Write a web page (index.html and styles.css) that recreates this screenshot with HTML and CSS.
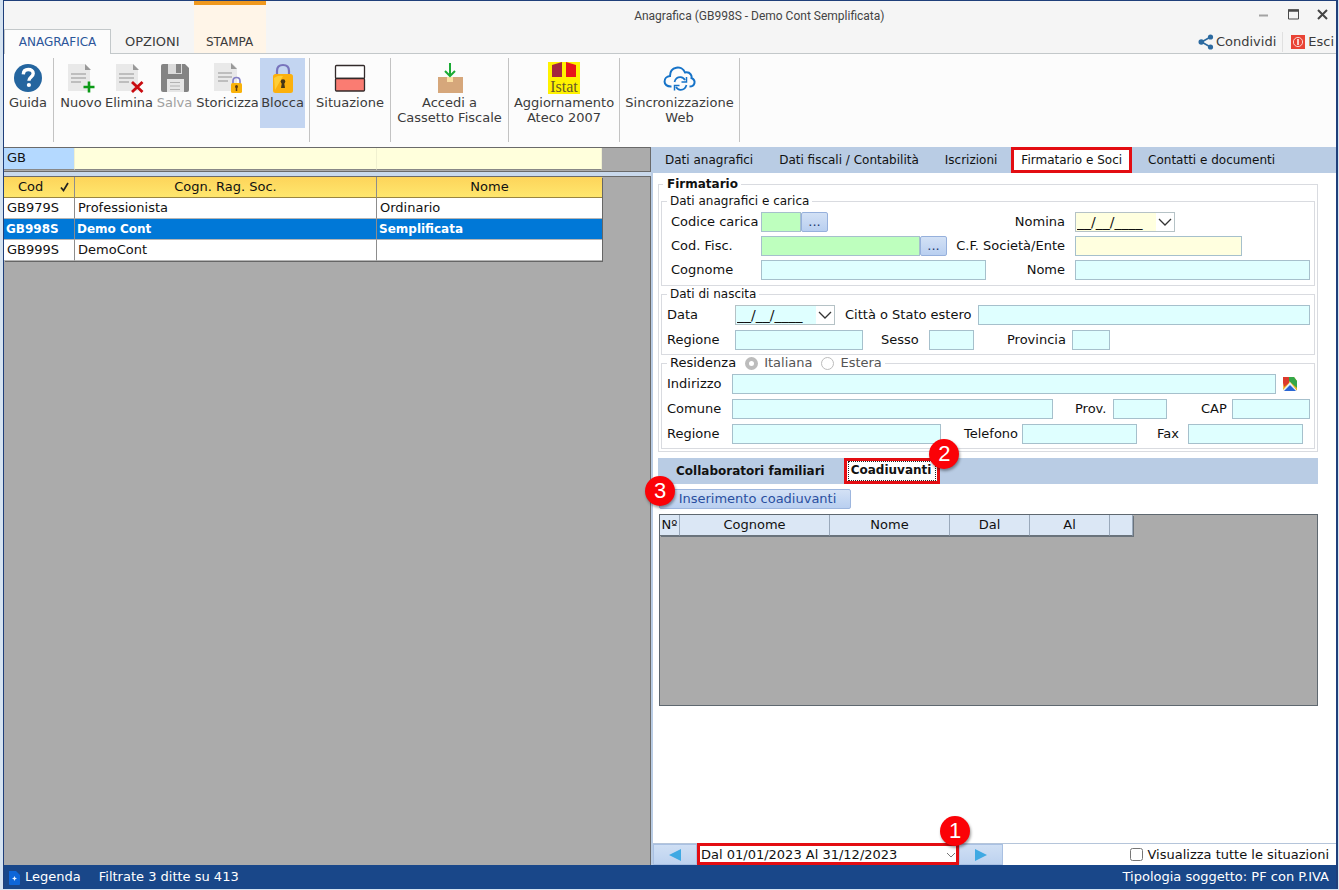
FILE: index.html
```html
<!DOCTYPE html>
<html lang="it">
<head>
<meta charset="utf-8">
<title>Anagrafica (GB998S - Demo Cont Semplificata)</title>
<link rel="stylesheet" href="styles.css">
</head>
<body>
<div class="window">
  <header class="titlebar">
    <nav class="ribbon-tabs">
      <button class="ribbon-tab active">ANAGRAFICA</button>
      <button class="ribbon-tab">OPZIONI</button>
      <button class="ribbon-tab highlight">STAMPA</button>
    </nav>
    <div class="caption">
      <div class="caption-top">
        <h1 class="caption-title">Anagrafica (GB998S - Demo Cont Semplificata)</h1>
        <div class="window-controls">
          <button aria-label="Riduci"><svg width="11" height="11" viewBox="0 0 11 11"><path d="M1 6.5h9" stroke="#a3a3a3" stroke-width="2"/></svg></button>
          <button aria-label="Ingrandisci"><svg width="11" height="11" viewBox="0 0 11 11"><path d="M0.500 1v9h10V1z" fill="none" stroke="#4a4a4a"/><path d="M0 1.500h11" stroke="#4a4a4a" stroke-width="2.500"/></svg></button>
          <button aria-label="Chiudi"><svg width="11" height="11" viewBox="0 0 11 11"><path d="M1 1l9 9M10 1l-9 9" stroke="#444" stroke-width="2"/></svg></button>
        </div>
      </div>
      <div class="caption-links">
        <button class="link-button"><svg width="16" height="16" viewBox="0 0 16 16"><path d="M12.500 3L3.500 8l9 5" fill="none" stroke="#2c6aa0" stroke-width="1.600"/><circle cx="12.500" cy="3" r="2.600" fill="#2c6aa0"/><circle cx="3.300" cy="8" r="2.800" fill="#2c6aa0"/><circle cx="12.500" cy="13" r="2.600" fill="#2c6aa0"/></svg>Condividi</button>
        <button class="link-button exit"><svg width="14" height="14" viewBox="0 0 14 14"><path d="M0 0h14v14H0z" fill="#e94335"/><circle cx="7" cy="7" r="4.600" fill="none" stroke="#fbd5d0"/><path d="M7 4v6" stroke="#fff" stroke-width="1.500"/></svg>Esci</button>
      </div>
    </div>
  </header>

  <div class="ribbon">
    <div class="ribbon-group">
      <button class="tool w-help"><svg width="32" height="32" viewBox="0 0 32 32"><circle cx="16" cy="16" r="14" fill="#24659f"/><path d="M11.300 12.300c.2-3.200 2.300-4.800 5-4.800 2.900 0 4.900 1.600 4.900 4 0 3.400-4.300 3.600-4.300 7.300" fill="none" stroke="#fff" stroke-width="3.400"/><circle cx="16.900" cy="23" r="2.100" fill="#fff"/></svg>Guida</button>
    </div>
    <div class="ribbon-group edit">
      <button class="tool w-new"><svg width="32" height="32" viewBox="0 0 32 32"><path d="M3 2h17l5 5v22H3z" fill="#e9e9e9"/><path d="M20 2v6h6z" fill="#999"/><path d="M6 12h15M6 16h15M6 20h10" stroke="#b0b0b0" stroke-width="1.500"/><path d="M24 19.500v11M18.500 25h11" stroke="#0b9a16" stroke-width="2.600"/></svg>Nuovo</button>
      <button class="tool w-new"><svg width="32" height="32" viewBox="0 0 32 32"><path d="M3 2h17l5 5v22H3z" fill="#e9e9e9"/><path d="M20 2v6h6z" fill="#999"/><path d="M6 12h15M6 16h15M6 20h10" stroke="#b0b0b0" stroke-width="1.500"/><path d="M19 20l10.500 10M29.500 20L19 30" stroke="#c90b10" stroke-width="2.800"/></svg>Elimina</button>
      <button class="tool w-save" disabled><svg width="32" height="32" viewBox="0 0 32 32"><path d="M4 2h22l4 4v22q0 2-2 2H4q-2 0-2-2V4q0-2 2-2z" fill="#787878"/><path d="M9 2h14v10H9z" fill="#d8d8d8"/><path d="M17 2h5v9h-5z" fill="#787878"/><path d="M8 17h17v13H8z" fill="#e4e4e4"/><path d="M11 20.500h10M11 24h10M11 27.500h10" stroke="#aaa"/></svg>Salva</button>
      <button class="tool w-store"><svg width="32" height="32" viewBox="0 0 32 32"><path d="M2 1h18l5 5v23H2z" fill="#e9e9e9"/><path d="M19 1v6h6z" fill="#999"/><path d="M6 11h14M6 15h14M6 19h10" stroke="#b0b0b0" stroke-width="1.500"/><path d="M21 22v-3q0-3.500 3.500-3.500T28 19v3" fill="none" stroke="#8580c5" stroke-width="1.700"/><rect x="19" y="21" width="11" height="10" rx="1.500" fill="#f9b20a"/><circle cx="24.500" cy="24.500" r="1.500" fill="#5b3a13"/><path d="M24.500 25v4" stroke="#5b3a13" stroke-width="1.500"/></svg>Storicizza</button>
      <button class="tool w-lock pressed"><svg width="32" height="32" viewBox="0 0 32 32"><path d="M10 15V9q0-6 6-6t6 6v6" fill="none" stroke="#7874bd" stroke-width="2.200"/><rect x="6" y="12" width="20" height="19" rx="2.500" fill="#fbb00e"/><path d="M7 16q4-3 9-2l-8 14z" fill="#ffcd35"/><circle cx="16" cy="19.500" r="2.300" fill="#463516"/><path d="M15 20h2l1 6h-4z" fill="#463516"/></svg>Blocca</button>
    </div>
    <div class="ribbon-group">
      <button class="tool w-state"><svg width="32" height="32" viewBox="0 0 32 32"><rect x="1.500" y="3.500" width="29" height="13" rx="1" fill="#fff" stroke="#332b2b" stroke-width="1.300"/><rect x="1.500" y="16.500" width="29" height="12.500" rx="1" fill="#fa7c72" stroke="#332b2b" stroke-width="1.300"/></svg>Situazione</button>
    </div>
    <div class="ribbon-group">
      <button class="tool w-box"><svg width="32" height="32" viewBox="0 0 32 32"><path d="M4 15h9v5h6v-5h10v16H4z" fill="#d6a77b"/><path d="M13 15h6v5h-6z" fill="#fbdfa5"/><path d="M16 1v13M11 9l5 5 5-5" fill="none" stroke="#1bab35" stroke-width="2"/></svg>Accedi a<br>Cassetto Fiscale</button>
    </div>
    <div class="ribbon-group">
      <button class="tool w-istat"><svg width="32" height="32" viewBox="0 0 32 32"><path d="M0 0h32v32H0z" fill="#fff200"/><path d="M4 3l10-3v15H4z" fill="#a3263e"/><path d="M18 0l10 3v12H18z" fill="#e8151b"/><text class="istat" x="16" y="30" text-anchor="middle">Istat</text></svg>Aggiornamento<br>Ateco 2007</button>
    </div>
    <div class="ribbon-group">
      <button class="tool w-sync"><svg width="34" height="32" viewBox="0 0 34 32"><path d="M8.500 24.500C-1 25 0 14.500 7 14 7 4 19 3 22 10.500c6-1 7 4 6.500 5.500 5 2.500 3.500 8.500-2 8.500" fill="none" stroke="#1673c8" stroke-width="2"/><path d="M11.500 20q1.500-5 6-4.800 3 .2 4.500 3M23.500 23q-1.500 5-6 4.800-3-.2-4.500-3" fill="none" stroke="#1673c8" stroke-width="1.700"/><path d="M23.500 15v5h-5M11.500 28.500v-5h5" fill="none" stroke="#1673c8" stroke-width="1.500"/></svg>Sincronizzazione<br>Web</button>
    </div>
  </div>

  <main class="workspace">
    <section class="list-pane">
      <div class="filter-bar">
        <input class="filter code" aria-label="Filtro codice" value="GB">
        <input class="filter" aria-label="Filtro ragione sociale">
        <input class="filter" aria-label="Filtro nome">
      </div>
      <div class="list-body">
        <table class="company-table">
          <thead><tr><th class="c-code"><span class="sort-head">Cod<svg width="10" height="10" viewBox="0 0 10 10"><path d="M1 5.500l2.500 3L8 1" fill="none" stroke="#222" stroke-width="1.700"/></svg></span></th><th class="c-name">Cogn. Rag. Soc.</th><th class="c-first">Nome</th></tr></thead>
          <tbody>
            <tr><td>GB979S</td><td>Professionista</td><td>Ordinario</td></tr>
            <tr class="selected"><td>GB998S</td><td>Demo Cont</td><td>Semplificata</td></tr>
            <tr><td>GB999S</td><td>DemoCont</td><td></td></tr>
          </tbody>
        </table>
      </div>
    </section>

    <section class="detail-pane">
      <nav class="page-tabs">
        <button class="page-tab">Dati anagrafici</button>
        <button class="page-tab">Dati fiscali / Contabilità</button>
        <button class="page-tab">Iscrizioni</button>
        <button class="page-tab current">Firmatario e Soci</button>
        <button class="page-tab">Contatti e documenti</button>
      </nav>

      <div class="detail-body">
        <fieldset class="group outer">
          <legend class="strong">Firmatario</legend>

          <fieldset class="group role">
            <legend>Dati anagrafici e carica</legend>
            <div class="role-row">
              <label for="carica">Codice carica</label>
              <div class="combo"><input class="field green w40" id="carica"><button class="dots" aria-label="Cerca carica">...</button></div>
              <label class="end" for="nomina">Nomina</label>
              <div class="date lemon"><input id="nomina" value="__/__/____"><button aria-label="Apri calendario nomina"><svg width="14" height="9" viewBox="0 0 14 9"><path d="M1 1l6 6 6-6" fill="none" stroke="#333" stroke-width="1.300"/></svg></button></div>
            </div>
            <div class="role-row">
              <label for="cf">Cod. Fisc.</label>
              <div class="combo tax"><input class="field green grow" id="cf"><button class="dots" aria-label="Cerca codice fiscale">...</button></div>
              <label class="end" for="cfente">C.F. Società/Ente</label>
              <div class="combo entity"><input class="field lemon grow" id="cfente"></div>
            </div>
            <div class="role-row">
              <label for="cognome">Cognome</label>
              <input class="field" id="cognome">
              <label class="end" for="nome">Nome</label>
              <input class="field" id="nome">
            </div>
          </fieldset>

          <fieldset class="group spaced">
            <legend>Dati di nascita</legend>
            <div class="row">
              <label class="l68" for="data">Data</label>
              <div class="date"><input id="data" value="__/__/____"><button aria-label="Apri calendario data"><svg width="14" height="9" viewBox="0 0 14 9"><path d="M1 1l6 6 6-6" fill="none" stroke="#333" stroke-width="1.300"/></svg></button></div>
              <label class="l-city" for="citta">Città o Stato estero</label>
              <input class="field grow" id="citta">
            </div>
            <div class="row">
              <label class="l68" for="regione1">Regione</label>
              <input class="field w128" id="regione1">
              <label class="l-sex" for="sesso">Sesso</label>
              <input class="field w45" id="sesso">
              <label class="l-prov" for="provincia">Provincia</label>
              <input class="field w38" id="provincia">
            </div>
          </fieldset>

          <fieldset class="group spaced">
            <legend class="residence">Residenza
              <label class="radio"><input type="radio" name="res" checked disabled>Italiana</label>
              <label class="radio"><input type="radio" name="res" disabled>Estera</label>
            </legend>
            <div class="row">
              <label class="l65" for="indirizzo">Indirizzo</label>
              <input class="field grow" id="indirizzo">
              <button class="map" aria-label="Apri mappa"><svg width="16" height="16" viewBox="0 0 16 16"><path d="M2 1h10l3 4v10L8 7 1 14z" fill="#f0b41e"/><path d="M7 1h5l3 4v7L7 5z" fill="#35a748"/><path d="M1 1h6v6l-5 4-1-4z" fill="#dc3a2c"/><path d="M8 6l7 9H1z" fill="#e6eefb"/><path d="M8 9l6 6H2z" fill="#2a66d4"/></svg></button>
            </div>
            <div class="row">
              <label class="l65" for="comune">Comune</label>
              <input class="field grow" id="comune">
              <label class="l-pr" for="prov">Prov.</label>
              <input class="field w54" id="prov">
              <label class="l-cap" for="cap">CAP</label>
              <input class="field w78" id="cap">
            </div>
            <div class="row phones">
              <label class="l65" for="regione2">Regione</label>
              <input class="field grow" id="regione2">
              <label class="l-tel" for="tel">Telefono</label>
              <input class="field w115" id="tel">
              <label class="l-fax" for="fax">Fax</label>
              <input class="field w115" id="fax">
            </div>
          </fieldset>
        </fieldset>

        <section class="members">
          <nav class="member-tabs">
            <button class="member-tab">Collaboratori familiari</button>
            <button class="member-tab current"><span>Coadiuvanti</span><b class="badge at-tab">2</b></button>
          </nav>
          <div class="member-tools">
            <button class="insert">Inserimento coadiuvanti<b class="badge at-insert">3</b></button>
          </div>
          <div class="member-grid">
            <table class="member-table">
              <thead><tr><th class="m-num">Nº</th><th class="m-sur">Cognome</th><th class="m-name">Nome</th><th class="m-date">Dal</th><th class="m-date">Al</th><th class="m-end"></th></tr></thead>
            </table>
          </div>
        </section>
      </div>

      <footer class="period-bar">
        <button class="step" aria-label="Periodo precedente"><svg width="12" height="12" viewBox="0 0 12 12"><path d="M12 0v12L0 6z" fill="#3fa9e3"/></svg></button>
        <div class="period"><select aria-label="Periodo"><option>Dal 01/01/2023 Al 31/12/2023</option></select><svg width="10" height="6" viewBox="0 0 10 6"><path d="M1 1l4 4 4-4" fill="none" stroke="#777"/></svg><b class="badge at-period">1</b></div>
        <button class="step" aria-label="Periodo successivo"><svg width="12" height="12" viewBox="0 0 12 12"><path d="M0 0v12l12-6z" fill="#3fa9e3"/></svg></button>
        <label class="show-all"><input type="checkbox">Visualizza tutte le situazioni</label>
      </footer>
    </section>
  </main>

  <footer class="status">
    <button class="legend-button"><svg width="13" height="15" viewBox="0 0 13 15"><path d="M1 1h7l4 4v9q0 1-1 1H2q-1 0-1-1z" fill="#0d66d8"/><path d="M6.500 6l.8 1.700 1.700.8-1.700.8-.8 1.700-.8-1.700-1.700-.8 1.700-.8z" fill="#e8f3ff"/></svg>Legenda</button>
    <span>Filtrate 3 ditte su 413</span>
    <span class="status-right">Tipologia soggetto: PF con P.IVA</span>
  </footer>
</div>
</body>
</html>
```
FILE: styles.css
```css
* { box-sizing: border-box; }
body {
  margin: 0;
  background: #d5e3f1;
  color: #111;
  font: 13px/16px "DejaVu Sans", Verdana, sans-serif;
}
button, input, select { font: inherit; color: inherit; margin: 0; padding: 0; border: 0; background: none; border-radius: 0; min-width: 0; }
button { white-space: nowrap; }
label { white-space: nowrap; }
svg { display: block; flex: none; }

.window {
  display: flex;
  flex-direction: column;
  min-height: calc(100vh - 1px);
  margin: 0 1px 1px 3px;
  border: solid #1f3f7a;
  border-width: 1px 2px 0 1px;
  background: #fff;
}

/* Title bar and ribbon */
.titlebar { display: flex; height: 53px; background: #f5f5f5; border-bottom: 1px solid #c3c8ca; color: #3b3b3b; }
.ribbon-tabs { display: flex; align-items: flex-end; flex: none; }
.ribbon-tab { height: 24px; padding: 2px 14px 0; }
.ribbon-tab.active { width: 107px; height: 25px; margin-bottom: -1px; padding: 0; background: #fcfcfc; border: 1px solid #c3c8ca; border-bottom: 0; color: #2b569a; font-size: 12px; }
.ribbon-tab.highlight { width: 72px; padding: 26px 0 0; align-self: stretch; height: auto; background: #fff5e8; border-top: 4px solid #f0981d; font-size: 12px; }
.caption { display: flex; flex-direction: column; flex: 1; }
.caption-top { display: flex; align-items: center; height: 29px; }
.caption-title { flex: 1; margin: 0; text-align: center; font: 12px/16px Roboto, sans-serif; color: #444; }
.window-controls { display: flex; width: 83px; justify-content: space-between; padding: 0 8px 3px 5px; }
.caption-links { display: flex; flex: 1; justify-content: flex-end; align-items: center; }
.link-button { display: flex; align-items: center; gap: 2px; height: 20px; padding-right: 6px; }
.link-button.exit { border-left: 1px solid #e0e0e0; padding: 0 2px 0 8px; gap: 3px; }

.ribbon { display: flex; height: 93px; padding: 4px 0; background: #fcfcfc; color: #3b3b3b; }
.ribbon-group { display: flex; height: 84px; border-right: 1px solid #c3c3c3; padding: 0 4px; }
.ribbon-group:first-child { padding: 0 1px 0 0; }
.ribbon-group.edit { padding-left: 3px; }
.tool { display: flex; flex-direction: column; align-items: center; height: 70px; padding-top: 4px; line-height: 15px; }
.tool svg { margin-bottom: 1px; }
.tool:disabled { color: #a0a0a0; }
.tool:disabled svg { opacity: .9; }
.tool.pressed { background: #c3d5f1; }
.w-help { width: 48px; }
.w-new { width: 48px; }
.w-save { width: 43px; }
.w-store { width: 64px; padding-right: 1px; }
.w-lock { width: 45px; }
.w-state { width: 72px; }
.w-box { width: 109px; }
.w-istat { width: 102px; }
.w-sync { width: 111px; }
.istat { font: 16px "Liberation Serif", serif; fill: #6a5b28; }

/* Company list */
.workspace { display: grid; grid-template-columns: minmax(0, 647fr) minmax(0, 685fr); flex: 1; }
.list-pane { display: flex; flex-direction: column; background: #c9d9ec; }
.filter-bar { display: grid; grid-template-columns: 71px minmax(0, 302fr) minmax(0, 225fr); height: 25px; padding: 0 48px 1px 0; background: #ababab; border: 1px solid #6a6a6a; border-left: 0; }
.filter { height: 22px; padding: 0 3px 2px; background: #ffffdc; border-bottom: 1px solid #888; border-right: 1px solid #f0f0d0; }
.filter.code { background: #b4d9ff; }
.list-body { flex: 1; margin-top: 4px; background: #ababab; border: 1px solid #6a6a6a; border-left: 0; border-bottom: 0; }
.company-table { width: calc(100% - 48px); table-layout: fixed; border-spacing: 0; box-shadow: 1px 1px #666; }
.company-table th, .company-table td { height: 21px; padding: 0 3px 1px; border-right: 1px solid #8d8d8d; text-align: left; white-space: nowrap; line-height: 16px; }
.company-table tr > :last-child { border-right: 0; }
.company-table th { font-weight: normal; text-align: center; background: linear-gradient(#fdd45a, #ffe76e); border-bottom: 1px solid #9a8540; }
.company-table td { background: #fff; border-bottom: 1px solid #b5b5b5; }
.company-table .selected td { background: #0078d7; color: #fff; font-weight: bold; font-size: 12px; padding: 0 2px; }
.c-code { width: 71px; }
.c-first { width: 225px; }
.sort-head { display: flex; align-items: center; justify-content: space-between; padding: 0 1px 0 11px; }

/* Detail pane */
.detail-pane { display: flex; flex-direction: column; border-left: 2px solid #b9cce4; }
.page-tabs { display: flex; gap: 2px; height: 26px; background: #b9cce4; font-size: 12px; }
.page-tab { padding: 0 12px; }
.page-tab.current { padding: 0 7px; background: #fff; border: 3px solid #e30d12; margin-right: 2px; }
.detail-body { flex: 1; display: flex; flex-direction: column; padding: 3px 18px 0 5px; }

.group { margin: 0; padding: 0 2px 2px; border: 1px solid #d9dbe0; min-width: 0; }
.group legend { height: 16px; padding: 0 3px; font-size: 12px; }
.group legend.strong { font-weight: bold; height: 17px; line-height: 16px; padding-left: 4px; margin-left: 2px; }
.group .residence { display: flex; align-items: center; gap: 9px; font-size: 13px; }
.role { padding: 3px 4px 5px 9px; display: grid; gap: 4px; }
.role > legend { margin-left: -4px; }
.role-row { display: grid; grid-template-columns: 90px minmax(0, 225fr) 89px minmax(0, 235fr); align-items: center; }
.spaced { padding: 3px 4px 4px 5px; }
.row { display: flex; align-items: center; }
.row + .row { margin-top: 5px; }
.row.phones { padding-right: 7px; }
.end { justify-self: end; margin-right: 10px; }
.combo { display: flex; }
.combo.tax { margin-right: 39px; }
.combo.entity { margin-right: 68px; }
.field { height: 20px; padding: 0 3px; background: #dfffff; border: 1px solid #a6c0cc; flex: none; }
.role-row > .field { width: 100%; }
.field.grow { flex: 1; width: 0; }
.green { background: #beffbe; }
.lemon.field, .date.lemon input { background: #ffffdf; }
.dots { width: 27px; height: 20px; flex: none; border: 1px solid #96b0dc; border-radius: 2px; background: linear-gradient(#d3e1f5, #b9cff0); line-height: 14px; color: #1f3a6d; }
.date { display: flex; width: 100px; height: 20px; border: 1px solid #b5c2c6; background: #fff; flex: none; }
.date input { width: 80px; padding-left: 1px; background: #dfffff; flex: none; font-size: 14px; }
.date button { flex: 1; display: flex; align-items: center; justify-content: center; }
.w40 { width: 40px; }
.w38 { width: 38px; }
.w45 { width: 45px; }
.w54 { width: 54px; }
.w78 { width: 78px; }
.w115 { width: 115px; }
.w128 { width: 128px; }
.l65 { width: 65px; }
.l68 { width: 68px; }
.l-city { width: 143px; padding-left: 10px; }
.l-sex { width: 66px; padding-left: 18px; }
.l-prov { width: 98px; padding-left: 33px; }
.l-pr { width: 60px; padding-left: 22px; }
.l-cap { width: 65px; padding-left: 34px; }
.l-tel { width: 81px; padding-left: 23px; }
.l-fax { width: 51px; padding-left: 20px; }
.map { width: 34px; padding-left: 6px; }
.radio { display: flex; align-items: center; gap: 6px; color: #555; }
.radio input { appearance: none; width: 13px; height: 13px; border: 1px solid #bcbcbc; border-radius: 50%; background: #fff; }
.radio input:checked { border: 4px solid #bcbcbc; }

.members { margin-top: 6px; }
.member-tabs { display: flex; height: 26px; background: #b9cce4; padding-left: 6px; font-size: 12px; }
.member-tab { padding: 0 12px; font-weight: bold; }
.member-tab.current { position: relative; margin-left: 7px; padding: 0 1px; background: #fff; border: 3px solid #e30d12; }
.member-tab.current span { display: block; height: 20px; padding: 0 4px 0 2px; border: 1px dotted #222; line-height: 17px; }
.member-tools { padding: 5px 0 5px 1px; }
.insert { position: relative; display: block; width: 192px; height: 20px; padding-left: 5px; border: 1px solid #9db6de; border-radius: 2px; background: linear-gradient(#d3e1f5, #b9cff0); color: #2a4fa0; }
.member-grid { height: 192px; margin-left: 1px; background: #ababab; border: 1px solid #5f6870; }
.member-table { width: 473px; table-layout: fixed; border-spacing: 0; box-shadow: 1px 1px #6a737c; }
.member-table th { height: 21px; padding: 0; font-weight: normal; background: #dbe7f5; border-right: 1px solid #9aa9bb; border-bottom: 1px solid #6a737c; }
.m-num { width: 20px; }
.m-sur { width: 150px; }
.m-name { width: 120px; }
.m-date { width: 80px; }
.m-end { width: 23px; }

.badge { position: absolute; display: grid; place-items: center; width: 30px; height: 30px; border-radius: 50%; background: #fb0207; color: #fff; font: 22px/30px "Liberation Sans", sans-serif; box-shadow: 1px 2px 3px #0006; }
.at-tab { top: -22px; right: -22px; }
.at-insert { top: -14px; left: -15px; }
.at-period { top: -30px; right: -14px; }

.period-bar { display: flex; align-items: center; height: 22px; border-top: 1px solid #b5c5da; }
.step { width: 44px; height: 21px; display: flex; align-items: center; justify-content: center; background: linear-gradient(#cfdff4, #bdd2ef); border: 1px solid #a9c0e2; }
.period { position: relative; width: 262px; height: 22px; margin-top: -1px; border: 3px solid #e30d12; display: flex; align-items: center; background: #fff; }
.period select { flex: 1; height: 16px; appearance: none; padding: 1px 0 0 1px; }
.period svg { position: absolute; right: 0; top: 6px; pointer-events: none; }
.show-all { display: flex; align-items: center; gap: 5px; margin-left: auto; padding-right: 7px; }
.show-all input { width: 13px; height: 13px; }

.status { display: flex; align-items: center; gap: 18px; height: 24px; padding: 0 7px 0 4px; background: #194789; color: #fff; }
.legend-button { display: flex; align-items: center; gap: 4px; }
.status-right { margin-left: auto; }
```
